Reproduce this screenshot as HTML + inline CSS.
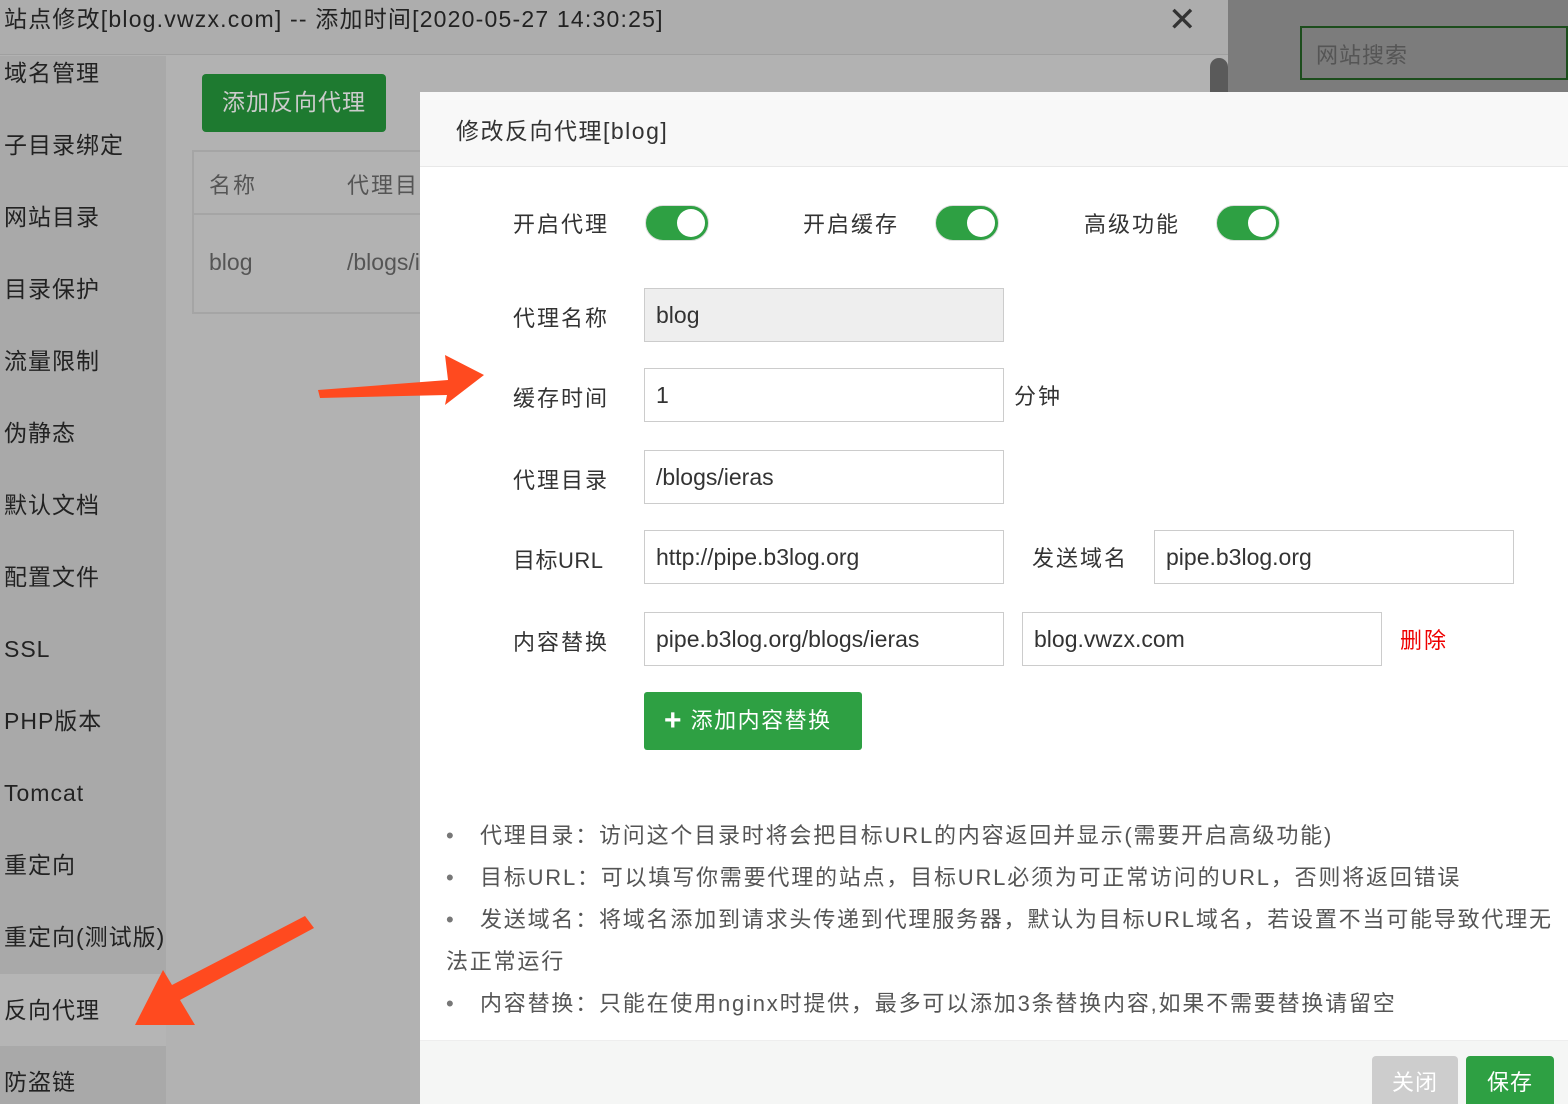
<!DOCTYPE html><html><head><meta charset="utf-8"><style>
*{margin:0;padding:0;box-sizing:border-box}
html,body{width:1568px;height:1104px;overflow:hidden}
body{position:relative;background:#b2b2b2;font-family:"Liberation Sans","Noto Sans CJK SC",sans-serif;color:#333}
.a{position:absolute}
.side div{position:absolute;left:0;width:166px;height:72px;font-size:23px;color:#222;padding-left:4px;line-height:72px;letter-spacing:1px;white-space:nowrap}
.lbl{position:absolute;font-size:22px;color:#333;letter-spacing:2px;white-space:nowrap}
.inp{position:absolute;height:54px;border:1px solid #ccc;background:#fff;font-size:23px;color:#333;padding-left:11px;line-height:52px}
.sw{position:absolute;width:64px;height:36px;border-radius:18px;background:#2ea043;border:1px solid #ddd}
.sw:after{content:"";position:absolute;right:3px;top:3px;width:28px;height:28px;border-radius:50%;background:#fff}
.tip{position:absolute;font-size:22px;color:#555;left:446px;letter-spacing:1.8px;white-space:nowrap}
.tip b{display:inline-block;width:34px;font-weight:normal;color:#777}
</style></head><body>
<div class="a" style="left:0;top:0;width:1228px;height:55px;background:#adadad;border-bottom:1px solid #a0a0a0"></div>
<div class="a" style="left:4px;top:0;font-size:23px;color:#222;letter-spacing:1.2px;white-space:nowrap">站点修改[blog.vwzx.com] -- 添加时间[2020-05-27 14:30:25]</div>
<div class="a" style="left:1168px;top:0;font-size:34px;color:#333">✕</div>
<div class="a" style="left:1228px;top:0;width:340px;height:92px;background:#7c7c7c"></div>
<div class="a" style="left:1300px;top:26px;width:268px;height:54px;border:2px solid #1c4d1c;font-size:22px;color:#555;padding:10px 14px;letter-spacing:1px">网站搜索</div>
<div class="a" style="left:1210px;top:58px;width:18px;height:34px;background:#5a5a5a;border-radius:9px 9px 0 0"></div>
<div class="side a" style="left:0;top:56px;width:166px;height:1048px;background:#a9a9a9">
<div style="top:-19px">域名管理</div><div style="top:53px">子目录绑定</div><div style="top:125px">网站目录</div><div style="top:197px">目录保护</div><div style="top:269px">流量限制</div><div style="top:341px">伪静态</div><div style="top:413px">默认文档</div><div style="top:485px">配置文件</div><div style="top:557px">SSL</div><div style="top:629px">PHP版本</div><div style="top:701px">Tomcat</div><div style="top:773px">重定向</div><div style="top:845px">重定向(测试版)</div><div style="top:918px;background:#b5b5b5">反向代理</div><div style="top:990px">防盗链</div>
</div>
<div class="a" style="left:202px;top:74px;width:184px;height:58px;background:#1e7a30;border-radius:4px;color:#ccc;font-size:23px;line-height:56px;text-align:center;letter-spacing:1px">添加反向代理</div>
<div class="a" style="left:192px;top:150px;width:240px;height:164px;border:2px solid #a5a5a5"></div>
<div class="a" style="left:194px;top:213px;width:240px;height:2px;background:#a5a5a5"></div>
<div class="a" style="left:209px;top:168px;font-size:22px;color:#555;letter-spacing:2px">名称</div>
<div class="a" style="left:347px;top:168px;font-size:22px;color:#555;letter-spacing:2px">代理目</div>
<div class="a" style="left:209px;top:249px;font-size:23px;color:#555">blog</div>
<div class="a" style="left:347px;top:249px;font-size:23px;color:#555">/blogs/i</div>
<div class="a" style="left:420px;top:92px;width:1148px;height:1012px;background:#fff">
<div class="a" style="left:0;top:0;width:1148px;height:75px;background:#f8f8f8;border-bottom:1px solid #e8e8e8"></div>
<div class="a" style="left:36px;top:20px;font-size:23px;color:#333;letter-spacing:1.5px">修改反向代理[blog]</div>
<div class="a" style="left:0;top:948px;width:1148px;height:64px;background:#f5f6f5;border-top:1px solid #eee"></div>
<div class="a" style="left:952px;top:964px;width:86px;height:48px;background:#cdcdcd;border-radius:4px 4px 0 0;color:#fff;font-size:22px;text-align:center;line-height:54px;letter-spacing:1px">关闭</div>
<div class="a" style="left:1046px;top:964px;width:88px;height:48px;background:#2ea043;border-radius:4px 4px 0 0;color:#fff;font-size:22px;text-align:center;line-height:54px;letter-spacing:1px">保存</div>
</div>
<svg class="a" style="left:0;top:0;z-index:5" width="500" height="1104"><polygon points="318,390 448,380 445,355 484,375 445,405 447,395 320,398" fill="#ff4a1f"/><polygon points="305,916 314,928 180,1000 195,1025 135,1025 163,970 172,985" fill="#ff4a1f"/></svg>
<div class="lbl" style="left:513px;top:207px">开启代理</div><div class="sw" style="left:645px;top:205px"></div>
<div class="lbl" style="left:803px;top:207px">开启缓存</div><div class="sw" style="left:935px;top:205px"></div>
<div class="lbl" style="left:1084px;top:207px">高级功能</div><div class="sw" style="left:1216px;top:205px"></div>
<div class="lbl" style="left:513px;top:301px">代理名称</div><div class="inp" style="left:644px;top:288px;width:360px;background:#eee">blog</div>
<div class="lbl" style="left:513px;top:381px">缓存时间</div><div class="inp" style="left:644px;top:368px;width:360px">1</div><div class="lbl" style="left:1014px;top:379px">分钟</div>
<div class="lbl" style="left:513px;top:463px">代理目录</div><div class="inp" style="left:644px;top:450px;width:360px">/blogs/ieras</div>
<div class="lbl" style="left:513px;top:543px;letter-spacing:0.5px">目标URL</div><div class="inp" style="left:644px;top:530px;width:360px">http://pipe.b3log.org</div>
<div class="lbl" style="left:1032px;top:541px">发送域名</div><div class="inp" style="left:1154px;top:530px;width:360px">pipe.b3log.org</div>
<div class="lbl" style="left:513px;top:625px">内容替换</div><div class="inp" style="left:644px;top:612px;width:360px">pipe.b3log.org/blogs/ieras</div>
<div class="inp" style="left:1022px;top:612px;width:360px">blog.vwzx.com</div>
<div class="lbl" style="left:1400px;top:623px;color:#e00">删除</div>
<div class="a" style="left:644px;top:692px;width:218px;height:58px;background:#2ea043;border-radius:3px;color:#fff;font-size:22px;line-height:58px;padding-left:20px;letter-spacing:1.5px;white-space:nowrap"><b style="font-size:30px;vertical-align:-2px">+</b>&nbsp;添加内容替换</div>
<div class="tip" style="top:818px"><b>•</b>代理目录：访问这个目录时将会把目标URL的内容返回并显示(需要开启高级功能)</div>
<div class="tip" style="top:860px"><b>•</b>目标URL：可以填写你需要代理的站点，目标URL必须为可正常访问的URL，否则将返回错误</div>
<div class="tip" style="top:902px"><b>•</b>发送域名：将域名添加到请求头传递到代理服务器，默认为目标URL域名，若设置不当可能导致代理无</div>
<div class="tip" style="top:944px">法正常运行</div>
<div class="tip" style="top:986px"><b>•</b>内容替换：只能在使用nginx时提供，最多可以添加3条替换内容,如果不需要替换请留空</div>
</body></html>
